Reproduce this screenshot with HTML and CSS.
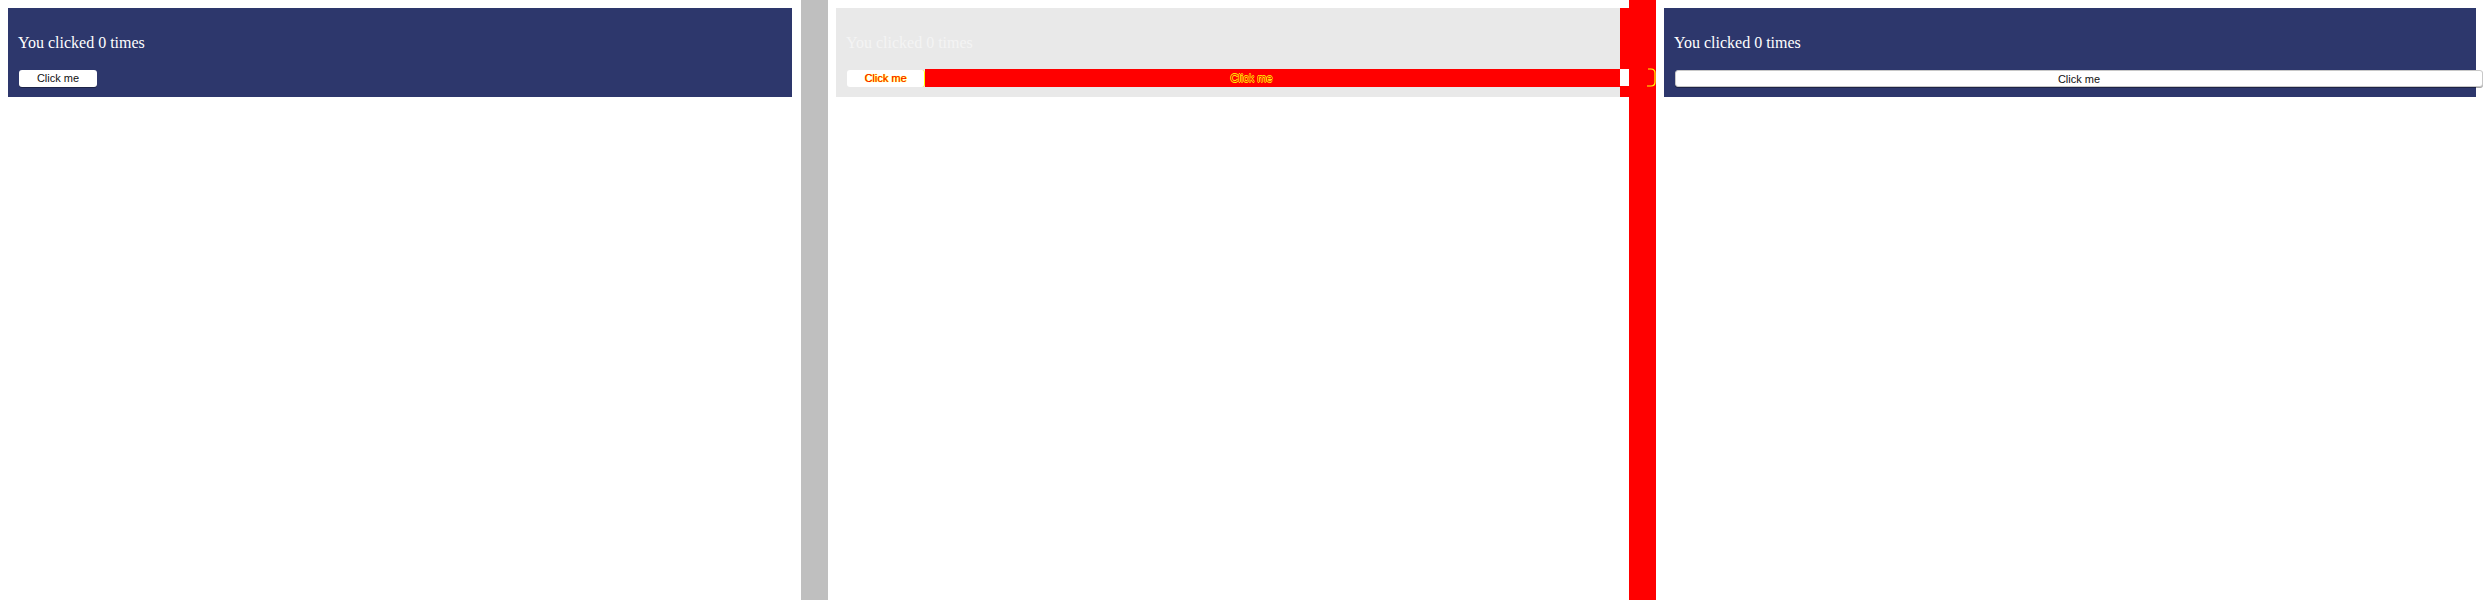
FILE: index.html
```html
<!DOCTYPE html>
<html>
<head>
<meta charset="utf-8">
<link rel="stylesheet" href="styles.css">
</head>
<body>
<div class="page">
  <section class="panel panel-a">
    <div class="box box-blue">
      <p class="count">You clicked 0 times</p>
      <button class="btn btn-small">Click me</button>
    </div>
  </section>
  <div class="gap"></div>
  <div class="divider divider-gray"></div>
  <section class="panel panel-b">
    <div class="box box-faded">
      <p class="count count-faded">You clicked 0 times</p>
      <button class="btn btn-small btn-diff">Click me</button>
    </div>
    <div class="diff-bar"><span class="diff-text">Click me</span></div>
    <div class="diff-edge"><span class="diff-hole"></span></div>
  </section>
  <div class="gap"></div>
  <div class="divider divider-red">
    <svg class="diff-curve" width="10" height="20" viewBox="0 0 10 20">
      <path d="M1 1 H4 Q8 1 8 5 V14 Q8 18 4 18 H0" fill="none" stroke="#ffff00" stroke-width="1.2"/>
    </svg>
  </div>
  <section class="panel panel-c">
    <div class="box box-blue box-wide">
      <p class="count">You clicked 0 times</p>
      <button class="btn btn-wide">Click me</button>
    </div>
  </section>
</div>
</body>
</html>
```
FILE: styles.css
```css
html, body {
  margin: 0;
  padding: 0;
  background: #ffffff;
}
.page {
  display: flex;
  width: 2484px;
  height: 600px;
}
.panel {
  padding: 8px;
  box-sizing: border-box;
  flex: none;
}
.panel-a, .panel-b {
  width: 800px;
}
.panel-b {
  position: relative;
}
.panel-c {
  width: 828px;
}
.gap {
  width: 1px;
  flex: none;
}
.divider {
  width: 27px;
  height: 600px;
  flex: none;
  position: relative;
}
.divider-gray {
  background: #bfbfbf;
}
.divider-red {
  background: #ff0000;
}
.box {
  height: 89px;
  padding: 26px 10px 0;
  box-sizing: border-box;
}
.box-blue {
  background: #2d376c;
}
.box-faded {
  background: #e9e9e9;
}
.box-wide {
  overflow: visible;
}
.count {
  margin: 0 0 18px;
  font-family: "Liberation Serif", "Times New Roman", serif;
  font-size: 16px;
  line-height: 18px;
  color: #ffffff;
}
.count-faded {
  color: #f4f4f4;
}
.btn {
  display: block;
  height: 17px;
  margin: 0 0 0 1px;
  padding: 0;
  border: none;
  border-radius: 3px;
  background: #ffffff;
  font-family: "Liberation Sans", Arial, sans-serif;
  font-size: 11px;
  line-height: 17px;
  color: #111111;
  text-align: center;
  box-shadow: 0 1px 0 rgba(0, 0, 0, 0.35);
}
.btn-small {
  width: 78px;
}
.btn-wide {
  width: 808px;
  border: 1px solid #c8c8c8;
  box-sizing: border-box;
}
.btn-diff {
  color: #ff0000;
  box-shadow: none;
  text-shadow: 0 0 1px #ffff00, 1px 0 0 #ffff00;
  border-right: 1px solid #ffff00;
}
.diff-bar {
  position: absolute;
  left: 97px;
  top: 69px;
  width: 695px;
  height: 18px;
  background: #ff0000;
  text-align: center;
  padding-right: 42px;
  box-sizing: border-box;
  font-family: "Liberation Sans", Arial, sans-serif;
  font-size: 11px;
  line-height: 18px;
}
.diff-text {
  color: #ff0000;
  text-shadow: 0.6px 0 0 #ffff00, -0.6px 0 0 #ffff00, 0 0.6px 0 #ffff00, 0 -0.6px 0 #ffff00;
}
.diff-edge {
  position: absolute;
  left: 792px;
  top: 8px;
  width: 9px;
  height: 89px;
  background: #ff0000;
}
.diff-hole {
  display: block;
  margin-top: 61px;
  width: 9px;
  height: 17px;
  background: #ffffff;
}
.diff-curve {
  position: absolute;
  left: 18px;
  top: 68px;
}
```
